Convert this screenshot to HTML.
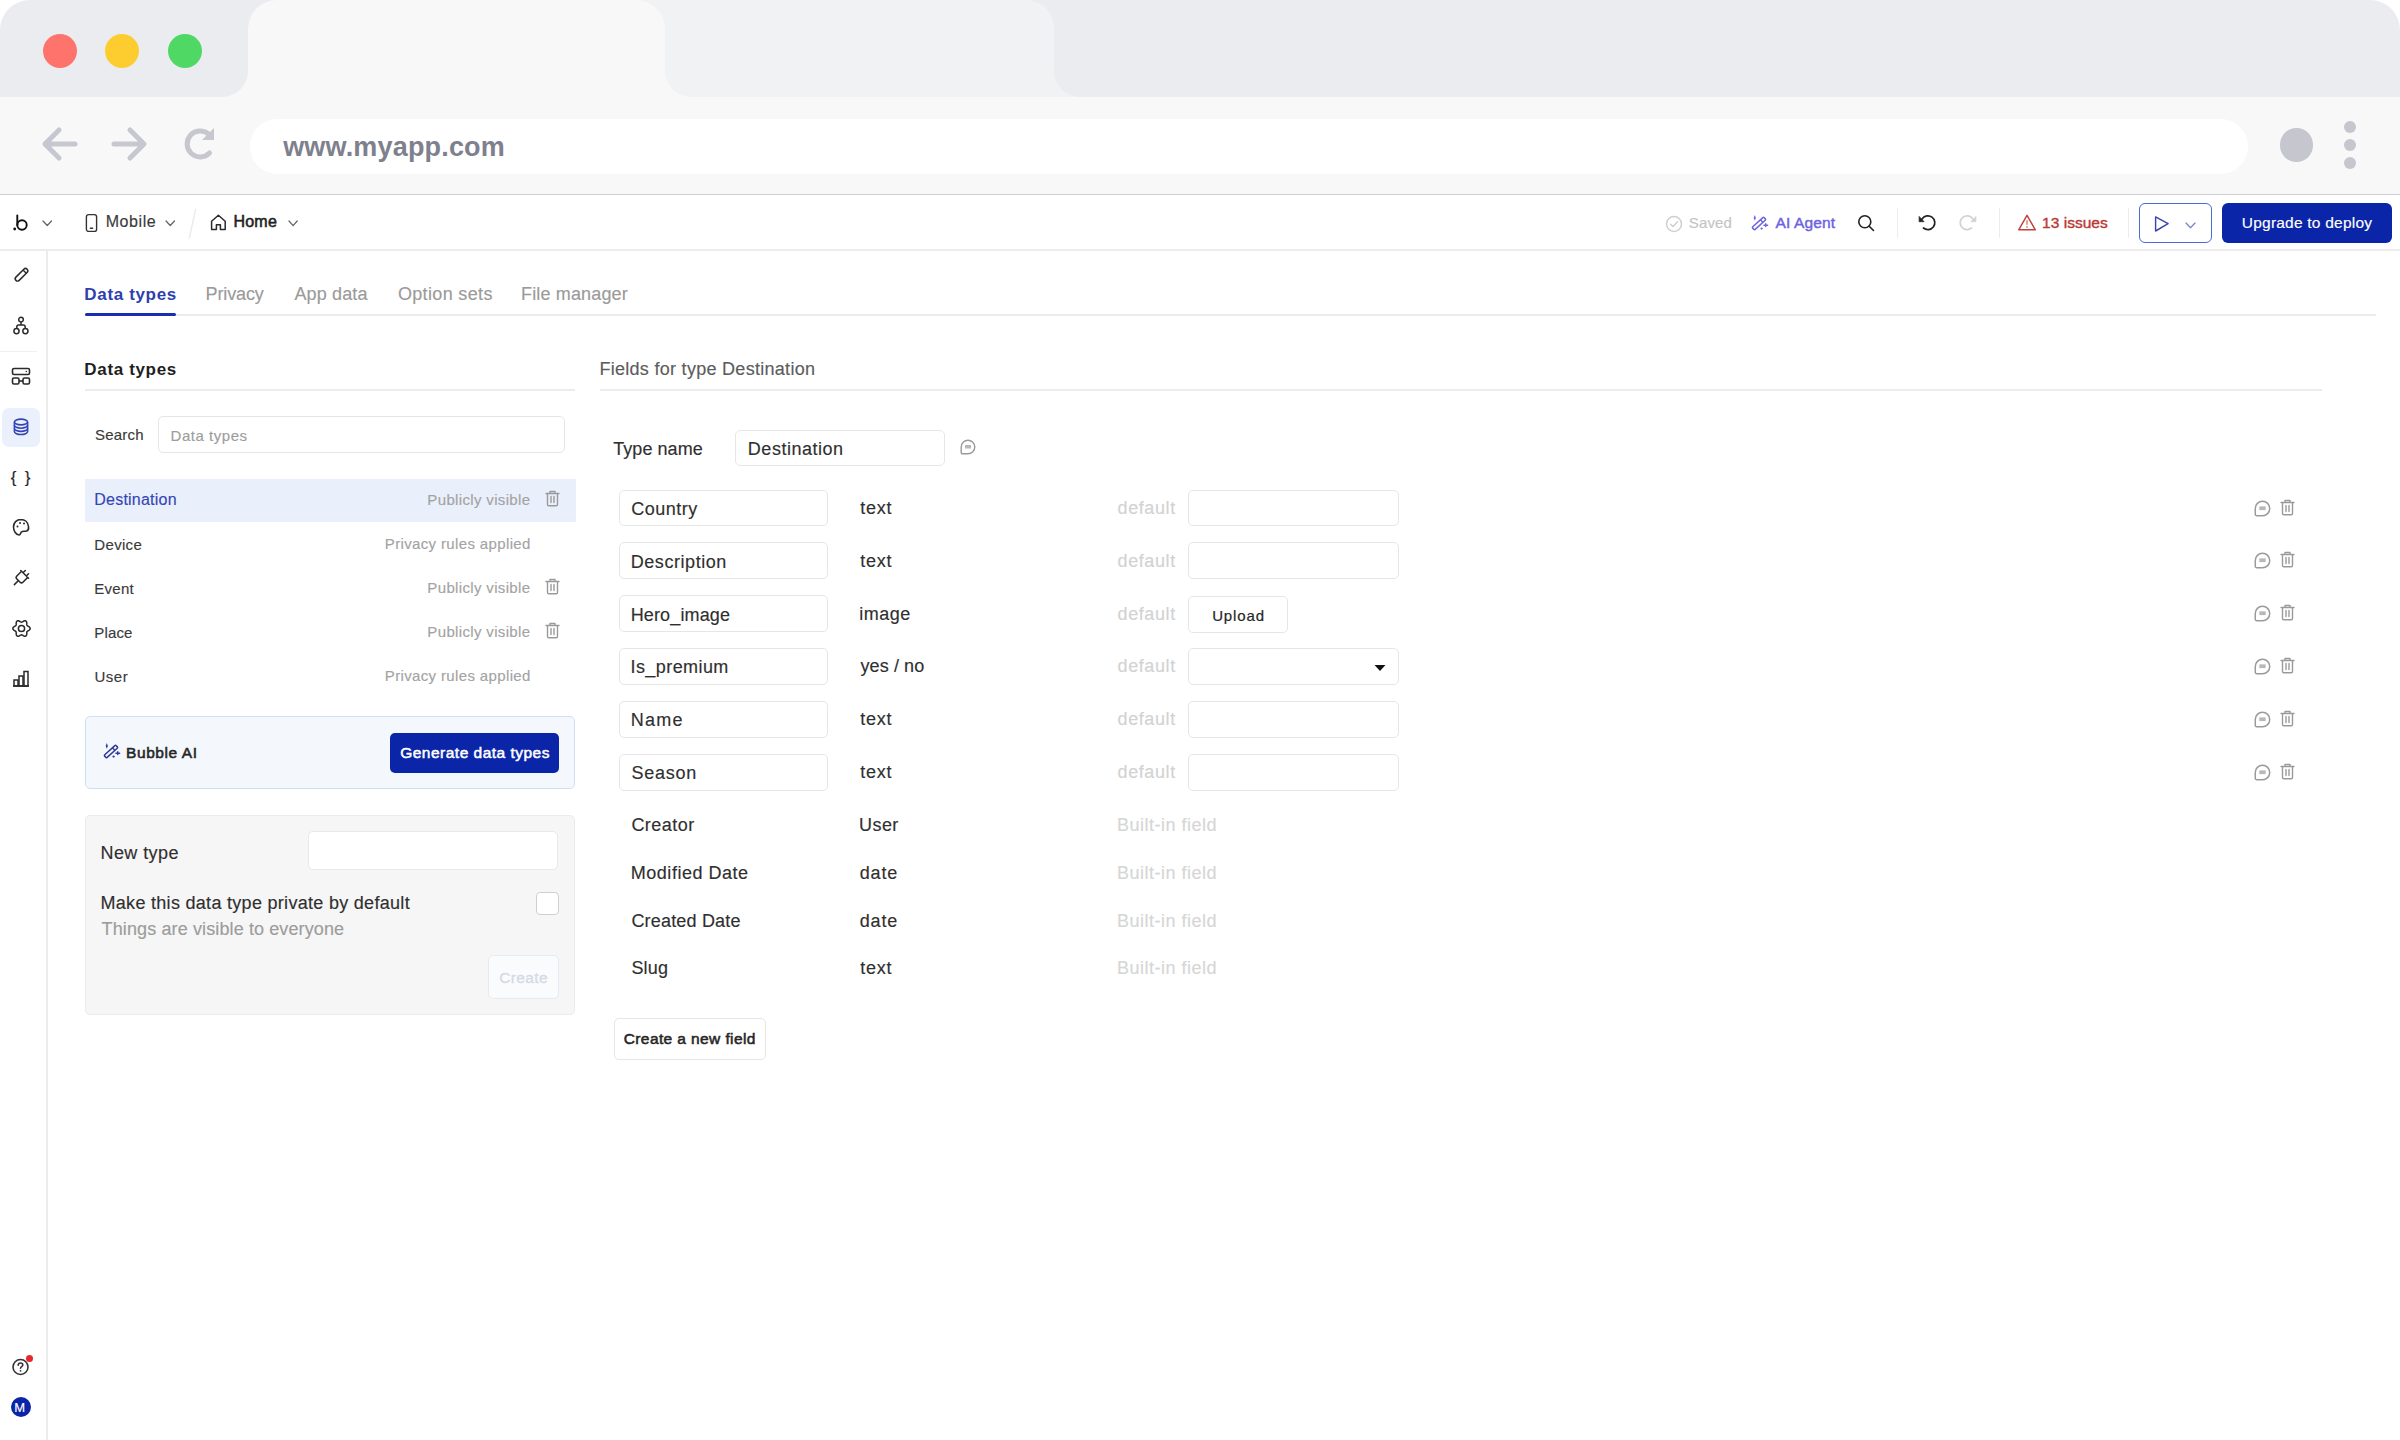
<!DOCTYPE html>
<html><head><meta charset="utf-8"><style>
html,body{margin:0;padding:0;width:2400px;height:1440px;overflow:hidden;background:#ffffff;}
body{position:relative;font-family:"Liberation Sans",sans-serif;}
.t{position:absolute;white-space:nowrap;}
.r{position:absolute;}
svg.r{overflow:visible;}
</style></head><body>
<div class="r" style="left:0px;top:0px;width:2400px;height:195px;background:#ebecef;border-radius:30px 30px 0 0;"></div>
<div class="r" style="left:620px;top:0px;width:434px;height:97px;background:#f1f2f4;border-radius:0 28px 0 0;"></div>
<svg class="r" style="left:1054px;top:71px;" width="26" height="26" viewBox="0 0 26 26" fill="none"><path d="M0 0 V26 H26 A26 26 0 0 1 0 0Z" fill="#f1f2f4"/></svg>
<div class="r" style="left:248px;top:0px;width:417px;height:120px;background:#f8f8f8;border-radius:29px 29px 0 0;"></div>
<div class="r" style="left:0px;top:97px;width:2400px;height:98px;background:#f8f8f8;"></div>
<svg class="r" style="left:222px;top:71px;" width="26" height="26" viewBox="0 0 26 26" fill="none"><path d="M26 0 V26 H0 A26 26 0 0 0 26 0Z" fill="#f8f8f8"/></svg>
<svg class="r" style="left:665px;top:71px;" width="26" height="26" viewBox="0 0 26 26" fill="none"><path d="M0 0 V26 H26 A26 26 0 0 1 0 0Z" fill="#f8f8f8"/></svg>
<div class="r" style="left:43px;top:34px;width:34px;height:34px;background:#fe736b;border-radius:17px;"></div>
<div class="r" style="left:105px;top:34px;width:34px;height:34px;background:#fdcd2f;border-radius:17px;"></div>
<div class="r" style="left:167.5px;top:34px;width:34.0px;height:34px;background:#50d865;border-radius:17px;"></div>
<svg class="r" style="left:40px;top:124px;" width="40" height="40" viewBox="0 0 40 40" fill="none"><path d="M35 20H7M19 6L5 20L19 34" stroke="#c6c7cf" stroke-width="5" stroke-linecap="round" stroke-linejoin="round"/></svg>
<svg class="r" style="left:109px;top:124px;" width="40" height="40" viewBox="0 0 40 40" fill="none"><path d="M5 20H33M21 6L35 20L21 34" stroke="#c6c7cf" stroke-width="5" stroke-linecap="round" stroke-linejoin="round"/></svg>
<svg class="r" style="left:180px;top:125px;" width="38" height="38" viewBox="0 0 38 38" fill="none"><path d="M29.5 28A13 13 0 1 1 28.5 9" stroke="#c6c7cf" stroke-width="5" stroke-linecap="round"/><path d="M34 3V15H22Z" fill="#c6c7cf"/></svg>
<div class="r" style="left:250px;top:119px;width:1998px;height:55px;background:#ffffff;border-radius:28px;"></div>
<div class="t" style="left:283.18px;top:134.05px;font-size:27px;line-height:27px;color:#7e818d;font-weight:700;letter-spacing:0.171px;">www.myapp.com</div>
<div class="r" style="left:2280px;top:128px;width:33px;height:34px;background:#c5c6ce;border-radius:17px;"></div>
<div class="r" style="left:2344px;top:121px;width:12px;height:12px;background:#c5c6ce;border-radius:6px;"></div>
<div class="r" style="left:2344px;top:139px;width:12px;height:12px;background:#c5c6ce;border-radius:6px;"></div>
<div class="r" style="left:2344px;top:156.5px;width:12px;height:12.0px;background:#c5c6ce;border-radius:6px;"></div>
<div class="r" style="left:0px;top:194px;width:2400px;height:1px;background:#cfcfd3;"></div>
<div class="r" style="left:0px;top:195px;width:2400px;height:55px;background:#ffffff;"></div>
<div class="r" style="left:0px;top:249px;width:2400px;height:2px;background:#ececec;"></div>
<svg class="r" style="left:12px;top:214px;" width="18" height="18" viewBox="0 0 18 18" fill="none"><circle cx="2.7" cy="15" r="1.4" fill="#111"/><path d="M5.3 1.5V11" stroke="#111" stroke-width="1.9" stroke-linecap="round"/><circle cx="10" cy="11" r="4.7" stroke="#111" stroke-width="1.9"/></svg>
<svg class="r" style="left:41.5px;top:220px;" width="10.5" height="6.5" viewBox="-1 -1 10.5 6.5" fill="none"><path d="M0 0L4.25 4.5L8.5 0" stroke="#666" stroke-width="1.3" stroke-linecap="round" stroke-linejoin="round"/></svg>
<svg class="r" style="left:85px;top:213px;" width="13" height="20" viewBox="0 0 13 20" fill="none"><rect x="1.4" y="1.6" width="10.2" height="16.8" rx="2.2" stroke="#333" stroke-width="1.4"/><path d="M5.4 15.3H7.6" stroke="#333" stroke-width="1.5" stroke-linecap="round"/></svg>
<div class="t" style="left:105.69px;top:214.40px;font-size:16px;line-height:16px;color:#3a3a3a;-webkit-text-stroke:0.15px #3a3a3a;letter-spacing:0.570px;">Mobile</div>
<svg class="r" style="left:165px;top:220px;" width="10.5" height="6.5" viewBox="-1 -1 10.5 6.5" fill="none"><path d="M0 0L4.25 4.5L8.5 0" stroke="#666" stroke-width="1.3" stroke-linecap="round" stroke-linejoin="round"/></svg>
<svg class="r" style="left:187px;top:207px;" width="10" height="33" viewBox="0 0 10 33" fill="none"><path d="M8.7 1.8L2.2 31.6" stroke="#ebebeb" stroke-width="1.5"/></svg>
<svg class="r" style="left:209px;top:213px;" width="18" height="18" viewBox="0 0 18 18" fill="none"><path d="M2.6 8.3L9.4 2.3L16.2 8.3V16.6H11.4V11.8H7.4V16.6H2.6Z" stroke="#2a2a2a" stroke-width="1.5" stroke-linejoin="round"/></svg>
<div class="t" style="left:233.39px;top:213.90px;font-size:16px;line-height:16px;color:#222;-webkit-text-stroke:0.55px #222;letter-spacing:0.273px;">Home</div>
<svg class="r" style="left:287.8px;top:220.2px;" width="10.2" height="6.6" viewBox="-1 -1 10.2 6.6" fill="none"><path d="M0 0L4.1 4.6L8.2 0" stroke="#666" stroke-width="1.3" stroke-linecap="round" stroke-linejoin="round"/></svg>
<svg class="r" style="left:1665px;top:215px;" width="18" height="18" viewBox="0 0 18 18" fill="none"><circle cx="9" cy="9" r="7.5" stroke="#cfcfcf" stroke-width="1.5"/><path d="M5.5 9.2L8 11.5L12.5 6.8" stroke="#cfcfcf" stroke-width="1.5" stroke-linecap="round" stroke-linejoin="round"/></svg>
<div class="t" style="left:1688.82px;top:215.25px;font-size:15px;line-height:15px;color:#c4c4c4;-webkit-text-stroke:0.15px #c4c4c4;letter-spacing:0.154px;">Saved</div>
<svg class="r" style="left:1750px;top:214px;" width="18" height="18" viewBox="0 0 18 18" fill="none"><g transform="rotate(-42 9 9.5)"><rect x="1.2" y="7.7" width="15.6" height="3.6" rx="1" stroke="#6d62e0" stroke-width="1.5"/><path d="M12.6 7.7V11.3" stroke="#6d62e0" stroke-width="1.4"/></g><path d="M4.8 1L5.9 3.9L4.8 6.8L3.7 3.9Z" fill="#6d62e0"/><path d="M13.9 11.2H17.6M15.75 9.8V12.6" stroke="#6d62e0" stroke-width="1.4" stroke-linecap="round"/><circle cx="11.6" cy="14.6" r="1.15" fill="#6d62e0"/></svg>
<div class="t" style="left:1775.47px;top:214.82px;font-size:15.5px;line-height:15.5px;color:#6d62e0;-webkit-text-stroke:0.45px #6d62e0;letter-spacing:0.143px;">AI Agent</div>
<svg class="r" style="left:1857px;top:214px;" width="19" height="19" viewBox="0 0 19 19" fill="none"><circle cx="7.8" cy="7.8" r="6" stroke="#222" stroke-width="1.6"/><path d="M12.2 12.2L16.5 16.5" stroke="#222" stroke-width="1.6" stroke-linecap="round"/></svg>
<div class="r" style="left:1896.5px;top:208px;width:1.5px;height:30px;background:#ededed;"></div>
<svg class="r" style="left:1916px;top:213px;" width="20" height="20" viewBox="0 0 20 20" fill="none"><path d="M4.8 7.4L6.25 5.74A6.9 6.9 0 1 1 7.47 14.99" stroke="#222" stroke-width="1.7" stroke-linecap="round"/><path d="M3.1 3.4V8.7H8.1Z" fill="#222" stroke="#222" stroke-width="0.7" stroke-linejoin="round"/></svg>
<svg class="r" style="left:1959.4px;top:213px;" width="20" height="20" viewBox="0 0 20 20" fill="none"><g transform="translate(20 0) scale(-1 1)"><path d="M4.8 7.4L6.25 5.74A6.9 6.9 0 1 1 7.47 14.99" stroke="#d2d2d2" stroke-width="1.7" stroke-linecap="round"/><path d="M3.1 3.4V8.7H8.1Z" fill="#d2d2d2" stroke="#d2d2d2" stroke-width="0.7" stroke-linejoin="round"/></g></svg>
<div class="r" style="left:1998.5px;top:208px;width:1.5px;height:30px;background:#ededed;"></div>
<svg class="r" style="left:2017px;top:213px;" width="20" height="19" viewBox="0 0 20 19" fill="none"><path d="M10 2.3L18.3 16.8H1.7Z" stroke="#c0403a" stroke-width="1.45" stroke-linejoin="round"/><path d="M10 7.6V11.3" stroke="#d27a74" stroke-width="1.4" stroke-linecap="round"/><circle cx="10" cy="13.9" r="0.85" fill="#d27a74"/></svg>
<div class="t" style="left:2042.02px;top:214.52px;font-size:15.5px;line-height:15.5px;color:#b93a32;-webkit-text-stroke:0.4px #b93a32;letter-spacing:0.030px;">13 issues</div>
<div class="r" style="left:2127.5px;top:208px;width:1.5px;height:30px;background:#ededed;"></div>
<div class="r" style="left:2139px;top:203px;width:73px;height:40px;background:#fff;border:1.5px solid #4a6bd0;box-sizing:border-box;border-radius:6px;"></div>
<svg class="r" style="left:2153px;top:214px;" width="18" height="19" viewBox="0 0 18 19" fill="none"><path d="M2.6 2.9L15.1 9.7L2.6 17Z" stroke="#3a46b0" stroke-width="1.45" stroke-linejoin="round"/></svg>
<svg class="r" style="left:2185.3px;top:221.8px;" width="11" height="6.8" viewBox="-1 -1 11 6.8" fill="none"><path d="M0 0L4.5 4.8L9 0" stroke="#7f86c4" stroke-width="1.3" stroke-linecap="round" stroke-linejoin="round"/></svg>
<div class="r" style="left:2222px;top:203px;width:170px;height:40px;background:#0b25a8;border-radius:6px;"></div>
<div class="t" style="left:2241.80px;top:214.82px;font-size:15.5px;line-height:15.5px;color:#ffffff;-webkit-text-stroke:0.15px #ffffff;letter-spacing:0.219px;">Upgrade to deploy</div>
<div class="r" style="left:46px;top:250px;width:2px;height:1190px;background:#ececec;"></div>
<div class="r" style="left:0px;top:351px;width:37px;height:1px;background:#f0f0f0;"></div>
<div class="r" style="left:2px;top:408px;width:38px;height:39px;background:#ebf1fc;border-radius:7px;"></div>
<svg class="r" style="left:12px;top:266px;" width="18" height="18" viewBox="0 0 18 18" fill="none"><g transform="rotate(-45 9.5 8.8)"><rect x="1.6" y="6.5" width="15.8" height="4.6" rx="2.3" stroke="#2b2b2b" stroke-width="1.5"/><path d="M13.9 6.5V11.1" stroke="#2b2b2b" stroke-width="1.4"/></g></svg>
<svg class="r" style="left:12px;top:316px;" width="18" height="20" viewBox="0 0 18 20" fill="none"><circle cx="9" cy="3.6" r="2.3" stroke="#2b2b2b" stroke-width="1.5"/><circle cx="4.5" cy="15.1" r="2.6" stroke="#2b2b2b" stroke-width="1.5"/><circle cx="13.4" cy="15.1" r="2.6" stroke="#2b2b2b" stroke-width="1.5"/><path d="M9 5.9V9M4.8 12.5V11C4.8 10 5.6 9 6.6 9H11.4C12.4 9 13.2 10 13.2 11V12.5" stroke="#2b2b2b" stroke-width="1.5"/></svg>
<svg class="r" style="left:11px;top:367px;" width="20" height="19" viewBox="0 0 20 19" fill="none"><rect x="1.5" y="1.5" width="17" height="6" rx="1.5" stroke="#2b2b2b" stroke-width="1.6"/><rect x="1.5" y="11" width="6.5" height="6" rx="1.5" stroke="#2b2b2b" stroke-width="1.6"/><rect x="12" y="11" width="6.5" height="6" rx="1.5" stroke="#2b2b2b" stroke-width="1.6"/><path d="M8 14H12" stroke="#2b2b2b" stroke-width="1.6"/><circle cx="15.3" cy="4.5" r="0.8" fill="#2b2b2b"/></svg>
<svg class="r" style="left:12px;top:417px;" width="18" height="20" viewBox="0 0 18 20" fill="none"><ellipse cx="9" cy="5" rx="6.6" ry="2.9" stroke="#3446b5" stroke-width="1.6"/><path d="M2.4 5V14.6C2.4 16.2 5.4 17.5 9 17.5C12.6 17.5 15.6 16.2 15.6 14.6V5" stroke="#3446b5" stroke-width="1.6"/><path d="M2.4 8.3C2.4 9.9 5.4 11.2 9 11.2C12.6 11.2 15.6 9.9 15.6 8.3M2.4 11.5C2.4 13.1 5.4 14.4 9 14.4C12.6 14.4 15.6 13.1 15.6 11.5" stroke="#3446b5" stroke-width="1.6"/></svg>
<div class="t" style="left:10.72px;top:468.55px;font-size:17px;line-height:17px;color:#2b2b2b;-webkit-text-stroke:0.15px #2b2b2b;letter-spacing:1.763px;">{ }</div>
<svg class="r" style="left:12px;top:518px;" width="18" height="19" viewBox="0 0 18 19" fill="none"><path d="M9 1.5C4.5 1.5 1.5 4.8 1.5 9C1.5 13 4.3 17 7 17C8.7 17 8.3 15 9.3 14C10.5 12.8 12.5 13.5 14.5 13C16.3 12.5 16.8 10.5 16.5 8.5C16 4.3 12.8 1.5 9 1.5Z" stroke="#2b2b2b" stroke-width="1.6"/><circle cx="5.5" cy="8.5" r="1" fill="#2b2b2b"/><circle cx="8" cy="5" r="1" fill="#2b2b2b"/><circle cx="12" cy="5.5" r="1" fill="#2b2b2b"/></svg>
<svg class="r" style="left:12px;top:568px;" width="19" height="19" viewBox="0 0 19 19" fill="none"><g transform="rotate(-45 9.5 9.5)"><path d="M14 5.2H7.2Q5.2 5.2 5.2 7.2V11.8Q5.2 13.8 7.2 13.8H14" stroke="#2b2b2b" stroke-width="1.5" stroke-linejoin="round"/><path d="M14 4V15M14 7.2H17.2M14 11.8H17.2M5.2 9.5H-0.6" stroke="#2b2b2b" stroke-width="1.5" stroke-linecap="round"/></g></svg>
<svg class="r" style="left:11.5px;top:618.8px;" width="19" height="19" viewBox="0 0 19 19" fill="none"><path d="M18.15 9.50 L18.04 10.06 L17.74 10.59 L17.29 11.05 L16.74 11.44 L16.19 11.77 L15.68 12.06 L15.27 12.35 L15.00 12.67 L14.85 13.08 L14.81 13.57 L14.81 14.15 L14.80 14.80 L14.74 15.47 L14.56 16.10 L14.26 16.62 L13.83 16.99 L13.29 17.18 L12.68 17.18 L12.05 17.02 L11.44 16.74 L10.88 16.42 L10.37 16.13 L9.92 15.92 L9.50 15.85 L9.08 15.92 L8.63 16.13 L8.12 16.42 L7.56 16.74 L6.95 17.02 L6.32 17.18 L5.71 17.18 L5.18 16.99 L4.74 16.62 L4.44 16.10 L4.26 15.47 L4.20 14.80 L4.19 14.15 L4.19 13.57 L4.15 13.08 L4.00 12.67 L3.73 12.35 L3.32 12.06 L2.81 11.77 L2.26 11.44 L1.71 11.05 L1.26 10.59 L0.96 10.06 L0.85 9.50 L0.96 8.94 L1.26 8.41 L1.71 7.95 L2.26 7.56 L2.81 7.23 L3.32 6.94 L3.73 6.65 L4.00 6.33 L4.15 5.92 L4.19 5.43 L4.19 4.85 L4.20 4.20 L4.26 3.53 L4.44 2.90 L4.74 2.38 L5.17 2.01 L5.71 1.82 L6.32 1.82 L6.95 1.98 L7.56 2.26 L8.12 2.58 L8.63 2.87 L9.08 3.08 L9.50 3.15 L9.92 3.08 L10.37 2.87 L10.88 2.58 L11.44 2.26 L12.05 1.98 L12.68 1.82 L13.29 1.82 L13.83 2.01 L14.26 2.38 L14.56 2.90 L14.74 3.53 L14.80 4.20 L14.81 4.85 L14.81 5.43 L14.85 5.92 L15.00 6.32 L15.27 6.65 L15.68 6.94 L16.19 7.23 L16.74 7.56 L17.29 7.95 L17.74 8.41 L18.04 8.94Z" stroke="#2b2b2b" stroke-width="1.5" stroke-linejoin="round"/><circle cx="9.5" cy="9.5" r="3.1" stroke="#2b2b2b" stroke-width="1.5"/></svg>
<svg class="r" style="left:12px;top:670px;" width="18" height="17" viewBox="0 0 18 17" fill="none"><path d="M1 16H17" stroke="#2b2b2b" stroke-width="1.6"/><rect x="2" y="10" width="4" height="6" stroke="#2b2b2b" stroke-width="1.5"/><rect x="7" y="6" width="4" height="10" stroke="#2b2b2b" stroke-width="1.5"/><rect x="12" y="1.5" width="4" height="14.5" stroke="#2b2b2b" stroke-width="1.5"/></svg>
<svg class="r" style="left:11px;top:1357px;" width="19" height="19" viewBox="0 0 19 19" fill="none"><circle cx="9.5" cy="10" r="7.5" stroke="#333" stroke-width="1.6"/><path d="M7.2 8.2C7.2 6.8 8.2 6 9.5 6C10.8 6 11.8 6.8 11.8 8C11.8 9.5 9.5 9.7 9.5 11.3" stroke="#333" stroke-width="1.6" stroke-linecap="round"/><circle cx="9.5" cy="13.8" r="0.9" fill="#333"/></svg>
<div class="r" style="left:26px;top:1355px;width:7px;height:7px;background:#e8262b;border-radius:4px;"></div>
<div class="r" style="left:11px;top:1397px;width:20px;height:20px;background:#0b25a8;border-radius:10px;"></div>
<div class="t" style="left:14.23px;top:1400.95px;font-size:13px;line-height:13px;color:#ffffff;-webkit-text-stroke:0.15px #ffffff;">M</div>
<div class="t" style="left:84.36px;top:286.05px;font-size:17px;line-height:17px;color:#2f3fae;font-weight:700;letter-spacing:0.652px;">Data types</div>
<div class="t" style="left:205.52px;top:285.20px;font-size:18px;line-height:18px;color:#9a9a9a;-webkit-text-stroke:0.15px #9a9a9a;letter-spacing:-0.126px;">Privacy</div>
<div class="t" style="left:294.46px;top:285.20px;font-size:18px;line-height:18px;color:#9a9a9a;-webkit-text-stroke:0.15px #9a9a9a;letter-spacing:0.137px;">App data</div>
<div class="t" style="left:397.90px;top:285.20px;font-size:18px;line-height:18px;color:#9a9a9a;-webkit-text-stroke:0.15px #9a9a9a;letter-spacing:0.344px;">Option sets</div>
<div class="t" style="left:521.02px;top:285.20px;font-size:18px;line-height:18px;color:#9a9a9a;-webkit-text-stroke:0.15px #9a9a9a;letter-spacing:0.153px;">File manager</div>
<div class="r" style="left:85px;top:314px;width:2291px;height:2px;background:#ececec;"></div>
<div class="r" style="left:85px;top:313px;width:91px;height:3px;background:#1a2fb0;border-radius:1.5px;"></div>
<div class="t" style="left:84.36px;top:361.05px;font-size:17px;line-height:17px;color:#1f1f1f;font-weight:700;letter-spacing:0.652px;">Data types</div>
<div class="r" style="left:85px;top:389px;width:490px;height:2px;background:#ececec;"></div>
<div class="t" style="left:94.92px;top:427.25px;font-size:15px;line-height:15px;color:#3a3a3a;-webkit-text-stroke:0.15px #3a3a3a;letter-spacing:0.225px;">Search</div>
<div class="r" style="left:158px;top:416px;width:407px;height:37px;background:#fff;border:1.5px solid #e6e6e6;box-sizing:border-box;border-radius:5px;"></div>
<div class="t" style="left:170.57px;top:428.25px;font-size:15px;line-height:15px;color:#9d9d9d;-webkit-text-stroke:0.15px #9d9d9d;letter-spacing:0.539px;">Data types</div>
<div class="r" style="left:85px;top:479px;width:491px;height:43px;background:#e9f0fc;"></div>
<div class="t" style="left:94.29px;top:491.90px;font-size:16px;line-height:16px;color:#3446b5;-webkit-text-stroke:0.15px #3446b5;letter-spacing:0.223px;">Destination</div>
<div class="t" style="left:427.37px;top:491.75px;font-size:15px;line-height:15px;color:#a3a3a3;-webkit-text-stroke:0.15px #a3a3a3;letter-spacing:0.345px;">Publicly visible</div>
<svg class="r" style="left:545px;top:490.0px;" width="15" height="17" viewBox="0 0 15 17" fill="none"><path d="M1 3.5H14" stroke="#9a9a9a" stroke-width="1.4" stroke-linecap="round"/><path d="M5 3.5V1.5H10V3.5" stroke="#9a9a9a" stroke-width="1.4" stroke-linejoin="round"/><path d="M2.5 3.5V14.5C2.5 15.3 3 15.8 3.8 15.8H11.2C12 15.8 12.5 15.3 12.5 14.5V3.5" stroke="#9a9a9a" stroke-width="1.4"/><path d="M6 6.5V12.5M9 6.5V12.5" stroke="#9a9a9a" stroke-width="1.4" stroke-linecap="round"/></svg>
<div class="t" style="left:94.37px;top:536.75px;font-size:15px;line-height:15px;color:#3a3a3a;-webkit-text-stroke:0.15px #3a3a3a;letter-spacing:0.311px;">Device</div>
<div class="t" style="left:384.77px;top:535.75px;font-size:15px;line-height:15px;color:#a3a3a3;-webkit-text-stroke:0.15px #a3a3a3;letter-spacing:0.360px;">Privacy rules applied</div>
<div class="t" style="left:94.37px;top:580.75px;font-size:15px;line-height:15px;color:#3a3a3a;-webkit-text-stroke:0.15px #3a3a3a;letter-spacing:0.245px;">Event</div>
<div class="t" style="left:427.37px;top:579.75px;font-size:15px;line-height:15px;color:#a3a3a3;-webkit-text-stroke:0.15px #a3a3a3;letter-spacing:0.345px;">Publicly visible</div>
<svg class="r" style="left:545px;top:578.0px;" width="15" height="17" viewBox="0 0 15 17" fill="none"><path d="M1 3.5H14" stroke="#9a9a9a" stroke-width="1.4" stroke-linecap="round"/><path d="M5 3.5V1.5H10V3.5" stroke="#9a9a9a" stroke-width="1.4" stroke-linejoin="round"/><path d="M2.5 3.5V14.5C2.5 15.3 3 15.8 3.8 15.8H11.2C12 15.8 12.5 15.3 12.5 14.5V3.5" stroke="#9a9a9a" stroke-width="1.4"/><path d="M6 6.5V12.5M9 6.5V12.5" stroke="#9a9a9a" stroke-width="1.4" stroke-linecap="round"/></svg>
<div class="t" style="left:94.37px;top:624.75px;font-size:15px;line-height:15px;color:#3a3a3a;-webkit-text-stroke:0.15px #3a3a3a;letter-spacing:0.145px;">Place</div>
<div class="t" style="left:427.37px;top:623.75px;font-size:15px;line-height:15px;color:#a3a3a3;-webkit-text-stroke:0.15px #a3a3a3;letter-spacing:0.345px;">Publicly visible</div>
<svg class="r" style="left:545px;top:622.0px;" width="15" height="17" viewBox="0 0 15 17" fill="none"><path d="M1 3.5H14" stroke="#9a9a9a" stroke-width="1.4" stroke-linecap="round"/><path d="M5 3.5V1.5H10V3.5" stroke="#9a9a9a" stroke-width="1.4" stroke-linejoin="round"/><path d="M2.5 3.5V14.5C2.5 15.3 3 15.8 3.8 15.8H11.2C12 15.8 12.5 15.3 12.5 14.5V3.5" stroke="#9a9a9a" stroke-width="1.4"/><path d="M6 6.5V12.5M9 6.5V12.5" stroke="#9a9a9a" stroke-width="1.4" stroke-linecap="round"/></svg>
<div class="t" style="left:94.44px;top:668.75px;font-size:15px;line-height:15px;color:#3a3a3a;-webkit-text-stroke:0.15px #3a3a3a;letter-spacing:0.511px;">User</div>
<div class="t" style="left:384.77px;top:667.75px;font-size:15px;line-height:15px;color:#a3a3a3;-webkit-text-stroke:0.15px #a3a3a3;letter-spacing:0.360px;">Privacy rules applied</div>
<div class="r" style="left:85px;top:716px;width:490px;height:73px;background:#f4f8fd;border:1.5px solid #cfe0f3;box-sizing:border-box;border-radius:5px;"></div>
<svg class="r" style="left:102px;top:742px;" width="18" height="18" viewBox="0 0 18 18" fill="none"><g transform="rotate(-42 9 9.5)"><rect x="1.2" y="7.7" width="15.6" height="3.6" rx="1" stroke="#2d3a98" stroke-width="1.5"/><path d="M12.6 7.7V11.3" stroke="#2d3a98" stroke-width="1.4"/></g><path d="M4.8 1L5.9 3.9L4.8 6.8L3.7 3.9Z" fill="#2d3a98"/><path d="M13.9 11.2H17.6M15.75 9.8V12.6" stroke="#2d3a98" stroke-width="1.4" stroke-linecap="round"/><circle cx="11.6" cy="14.6" r="1.15" fill="#2d3a98"/></svg>
<div class="t" style="left:126.03px;top:745.23px;font-size:15.5px;line-height:15.5px;color:#262626;-webkit-text-stroke:0.55px #262626;letter-spacing:0.576px;">Bubble AI</div>
<div class="r" style="left:390px;top:733px;width:169px;height:40px;background:#0b25a8;border-radius:5px;"></div>
<div class="t" style="left:400.22px;top:745.33px;font-size:15.5px;line-height:15.5px;color:#ffffff;-webkit-text-stroke:0.5px #ffffff;letter-spacing:0.489px;">Generate data types</div>
<div class="r" style="left:85px;top:815px;width:490px;height:200px;background:#f6f6f6;border:1.5px solid #ebebeb;box-sizing:border-box;border-radius:5px;"></div>
<div class="t" style="left:100.52px;top:844.40px;font-size:18px;line-height:18px;color:#2f2f2f;-webkit-text-stroke:0.15px #2f2f2f;letter-spacing:0.418px;">New type</div>
<div class="r" style="left:308px;top:831px;width:250px;height:39px;background:#fff;border:1.5px solid #e8e8e8;box-sizing:border-box;border-radius:5px;"></div>
<div class="t" style="left:100.52px;top:894.40px;font-size:18px;line-height:18px;color:#2f2f2f;-webkit-text-stroke:0.15px #2f2f2f;letter-spacing:0.296px;">Make this data type private by default</div>
<div class="r" style="left:536px;top:892px;width:23px;height:23px;background:#fff;border:1.5px solid #cfcfcf;box-sizing:border-box;border-radius:4px;"></div>
<div class="t" style="left:101.60px;top:919.70px;font-size:18px;line-height:18px;color:#9c9c9c;-webkit-text-stroke:0.15px #9c9c9c;letter-spacing:0.117px;">Things are visible to everyone</div>
<div class="r" style="left:488px;top:955px;width:71px;height:44px;background:#fafbfd;border:1.5px solid #e5ebf3;box-sizing:border-box;border-radius:5px;"></div>
<div class="t" style="left:499.21px;top:969.83px;font-size:15.5px;line-height:15.5px;color:#d3dae6;-webkit-text-stroke:0.3px #d3dae6;letter-spacing:0.389px;">Create</div>
<div class="t" style="left:599.42px;top:359.70px;font-size:18px;line-height:18px;color:#5c5c5c;-webkit-text-stroke:0.15px #5c5c5c;letter-spacing:0.288px;">Fields for type Destination</div>
<div class="r" style="left:600px;top:389px;width:1722px;height:2px;background:#ececec;"></div>
<div class="t" style="left:613.20px;top:440.20px;font-size:18px;line-height:18px;color:#2f2f2f;-webkit-text-stroke:0.15px #2f2f2f;letter-spacing:0.066px;">Type name</div>
<div class="r" style="left:735px;top:430px;width:210px;height:36px;background:#fff;border:1.5px solid #e6e6e6;box-sizing:border-box;border-radius:5px;"></div>
<div class="t" style="left:747.82px;top:440.20px;font-size:18px;line-height:18px;color:#2f2f2f;-webkit-text-stroke:0.15px #2f2f2f;letter-spacing:0.527px;">Destination</div>
<svg class="r" style="left:960px;top:439px;" width="16" height="16" viewBox="0 0 16 16" fill="none"><path d="M8 1.2A6.8 6.8 0 1 1 8 14.8H2.5C1.8 14.8 1.2 14.2 1.2 13.5V8A6.8 6.8 0 0 1 8 1.2Z" stroke="#9a9a9a" stroke-width="1.4"/><rect x="5" y="6" width="6" height="3.5" fill="#9a9a9a" opacity="0.7"/></svg>
<div class="r" style="left:618.5px;top:489.5px;width:209.5px;height:36.5px;background:#fff;border:1.5px solid #e6e6e6;box-sizing:border-box;border-radius:5px;"></div>
<div class="t" style="left:631.29px;top:499.70px;font-size:18px;line-height:18px;color:#2f2f2f;-webkit-text-stroke:0.15px #2f2f2f;letter-spacing:0.484px;">Country</div>
<div class="t" style="left:860.23px;top:498.70px;font-size:18px;line-height:18px;color:#2f2f2f;-webkit-text-stroke:0.15px #2f2f2f;letter-spacing:0.796px;">text</div>
<div class="t" style="left:1117.54px;top:498.70px;font-size:18px;line-height:18px;color:#d2d2d2;-webkit-text-stroke:0.15px #d2d2d2;letter-spacing:0.604px;">default</div>
<div class="r" style="left:1188px;top:489.5px;width:210.5px;height:36.5px;background:#fff;border:1.5px solid #e6e6e6;box-sizing:border-box;border-radius:5px;"></div>
<svg class="r" style="left:2254px;top:499.5px;" width="17" height="17" viewBox="0 0 16 16" fill="none"><path d="M8 1.2A6.8 6.8 0 1 1 8 14.8H2.5C1.8 14.8 1.2 14.2 1.2 13.5V8A6.8 6.8 0 0 1 8 1.2Z" stroke="#9a9a9a" stroke-width="1.4"/><rect x="5" y="6" width="6" height="3.5" fill="#9a9a9a" opacity="0.7"/></svg>
<svg class="r" style="left:2280px;top:498.5px;" width="15" height="17" viewBox="0 0 15 17" fill="none"><path d="M1 3.5H14" stroke="#9a9a9a" stroke-width="1.4" stroke-linecap="round"/><path d="M5 3.5V1.5H10V3.5" stroke="#9a9a9a" stroke-width="1.4" stroke-linejoin="round"/><path d="M2.5 3.5V14.5C2.5 15.3 3 15.8 3.8 15.8H11.2C12 15.8 12.5 15.3 12.5 14.5V3.5" stroke="#9a9a9a" stroke-width="1.4"/><path d="M6 6.5V12.5M9 6.5V12.5" stroke="#9a9a9a" stroke-width="1.4" stroke-linecap="round"/></svg>
<div class="r" style="left:618.5px;top:542.4px;width:209.5px;height:36.5px;background:#fff;border:1.5px solid #e6e6e6;box-sizing:border-box;border-radius:5px;"></div>
<div class="t" style="left:630.72px;top:552.60px;font-size:18px;line-height:18px;color:#2f2f2f;-webkit-text-stroke:0.15px #2f2f2f;letter-spacing:0.558px;">Description</div>
<div class="t" style="left:860.23px;top:551.60px;font-size:18px;line-height:18px;color:#2f2f2f;-webkit-text-stroke:0.15px #2f2f2f;letter-spacing:0.796px;">text</div>
<div class="t" style="left:1117.54px;top:551.60px;font-size:18px;line-height:18px;color:#d2d2d2;-webkit-text-stroke:0.15px #d2d2d2;letter-spacing:0.604px;">default</div>
<div class="r" style="left:1188px;top:542.4px;width:210.5px;height:36.5px;background:#fff;border:1.5px solid #e6e6e6;box-sizing:border-box;border-radius:5px;"></div>
<svg class="r" style="left:2254px;top:552.4px;" width="17" height="17" viewBox="0 0 16 16" fill="none"><path d="M8 1.2A6.8 6.8 0 1 1 8 14.8H2.5C1.8 14.8 1.2 14.2 1.2 13.5V8A6.8 6.8 0 0 1 8 1.2Z" stroke="#9a9a9a" stroke-width="1.4"/><rect x="5" y="6" width="6" height="3.5" fill="#9a9a9a" opacity="0.7"/></svg>
<svg class="r" style="left:2280px;top:551.4px;" width="15" height="17" viewBox="0 0 15 17" fill="none"><path d="M1 3.5H14" stroke="#9a9a9a" stroke-width="1.4" stroke-linecap="round"/><path d="M5 3.5V1.5H10V3.5" stroke="#9a9a9a" stroke-width="1.4" stroke-linejoin="round"/><path d="M2.5 3.5V14.5C2.5 15.3 3 15.8 3.8 15.8H11.2C12 15.8 12.5 15.3 12.5 14.5V3.5" stroke="#9a9a9a" stroke-width="1.4"/><path d="M6 6.5V12.5M9 6.5V12.5" stroke="#9a9a9a" stroke-width="1.4" stroke-linecap="round"/></svg>
<div class="r" style="left:618.5px;top:595.3px;width:209.5px;height:36.5px;background:#fff;border:1.5px solid #e6e6e6;box-sizing:border-box;border-radius:5px;"></div>
<div class="t" style="left:630.72px;top:605.50px;font-size:18px;line-height:18px;color:#2f2f2f;-webkit-text-stroke:0.15px #2f2f2f;letter-spacing:0.131px;">Hero_image</div>
<div class="t" style="left:859.30px;top:604.50px;font-size:18px;line-height:18px;color:#2f2f2f;-webkit-text-stroke:0.15px #2f2f2f;letter-spacing:0.489px;">image</div>
<div class="t" style="left:1117.54px;top:604.50px;font-size:18px;line-height:18px;color:#d2d2d2;-webkit-text-stroke:0.15px #d2d2d2;letter-spacing:0.604px;">default</div>
<div class="r" style="left:1188px;top:596.3px;width:100px;height:36.5px;background:#fff;border:1.5px solid #e6e6e6;box-sizing:border-box;border-radius:5px;"></div>
<div class="t" style="left:1212.14px;top:607.55px;font-size:15px;line-height:15px;color:#262626;-webkit-text-stroke:0.2px #262626;letter-spacing:0.879px;">Upload</div>
<svg class="r" style="left:2254px;top:605.3px;" width="17" height="17" viewBox="0 0 16 16" fill="none"><path d="M8 1.2A6.8 6.8 0 1 1 8 14.8H2.5C1.8 14.8 1.2 14.2 1.2 13.5V8A6.8 6.8 0 0 1 8 1.2Z" stroke="#9a9a9a" stroke-width="1.4"/><rect x="5" y="6" width="6" height="3.5" fill="#9a9a9a" opacity="0.7"/></svg>
<svg class="r" style="left:2280px;top:604.3px;" width="15" height="17" viewBox="0 0 15 17" fill="none"><path d="M1 3.5H14" stroke="#9a9a9a" stroke-width="1.4" stroke-linecap="round"/><path d="M5 3.5V1.5H10V3.5" stroke="#9a9a9a" stroke-width="1.4" stroke-linejoin="round"/><path d="M2.5 3.5V14.5C2.5 15.3 3 15.8 3.8 15.8H11.2C12 15.8 12.5 15.3 12.5 14.5V3.5" stroke="#9a9a9a" stroke-width="1.4"/><path d="M6 6.5V12.5M9 6.5V12.5" stroke="#9a9a9a" stroke-width="1.4" stroke-linecap="round"/></svg>
<div class="r" style="left:618.5px;top:648.2px;width:209.5px;height:36.5px;background:#fff;border:1.5px solid #e6e6e6;box-sizing:border-box;border-radius:5px;"></div>
<div class="t" style="left:630.54px;top:658.40px;font-size:18px;line-height:18px;color:#2f2f2f;-webkit-text-stroke:0.15px #2f2f2f;letter-spacing:0.421px;">Is_premium</div>
<div class="t" style="left:860.46px;top:657.40px;font-size:18px;line-height:18px;color:#2f2f2f;-webkit-text-stroke:0.15px #2f2f2f;letter-spacing:0.108px;">yes / no</div>
<div class="t" style="left:1117.54px;top:657.40px;font-size:18px;line-height:18px;color:#d2d2d2;-webkit-text-stroke:0.15px #d2d2d2;letter-spacing:0.604px;">default</div>
<div class="r" style="left:1188px;top:648.2px;width:210.5px;height:36.5px;background:#fff;border:1.5px solid #e6e6e6;box-sizing:border-box;border-radius:5px;"></div>
<svg class="r" style="left:1374px;top:664px;" width="12" height="8" viewBox="0 0 12 8" fill="none"><path d="M0.5 1H11.5L6 7Z" fill="#111"/></svg>
<svg class="r" style="left:2254px;top:658.2px;" width="17" height="17" viewBox="0 0 16 16" fill="none"><path d="M8 1.2A6.8 6.8 0 1 1 8 14.8H2.5C1.8 14.8 1.2 14.2 1.2 13.5V8A6.8 6.8 0 0 1 8 1.2Z" stroke="#9a9a9a" stroke-width="1.4"/><rect x="5" y="6" width="6" height="3.5" fill="#9a9a9a" opacity="0.7"/></svg>
<svg class="r" style="left:2280px;top:657.2px;" width="15" height="17" viewBox="0 0 15 17" fill="none"><path d="M1 3.5H14" stroke="#9a9a9a" stroke-width="1.4" stroke-linecap="round"/><path d="M5 3.5V1.5H10V3.5" stroke="#9a9a9a" stroke-width="1.4" stroke-linejoin="round"/><path d="M2.5 3.5V14.5C2.5 15.3 3 15.8 3.8 15.8H11.2C12 15.8 12.5 15.3 12.5 14.5V3.5" stroke="#9a9a9a" stroke-width="1.4"/><path d="M6 6.5V12.5M9 6.5V12.5" stroke="#9a9a9a" stroke-width="1.4" stroke-linecap="round"/></svg>
<div class="r" style="left:618.5px;top:701.1px;width:209.5px;height:36.5px;background:#fff;border:1.5px solid #e6e6e6;box-sizing:border-box;border-radius:5px;"></div>
<div class="t" style="left:630.72px;top:711.30px;font-size:18px;line-height:18px;color:#2f2f2f;-webkit-text-stroke:0.15px #2f2f2f;letter-spacing:1.239px;">Name</div>
<div class="t" style="left:860.23px;top:710.30px;font-size:18px;line-height:18px;color:#2f2f2f;-webkit-text-stroke:0.15px #2f2f2f;letter-spacing:0.796px;">text</div>
<div class="t" style="left:1117.54px;top:710.30px;font-size:18px;line-height:18px;color:#d2d2d2;-webkit-text-stroke:0.15px #d2d2d2;letter-spacing:0.604px;">default</div>
<div class="r" style="left:1188px;top:701.1px;width:210.5px;height:36.5px;background:#fff;border:1.5px solid #e6e6e6;box-sizing:border-box;border-radius:5px;"></div>
<svg class="r" style="left:2254px;top:711.1px;" width="17" height="17" viewBox="0 0 16 16" fill="none"><path d="M8 1.2A6.8 6.8 0 1 1 8 14.8H2.5C1.8 14.8 1.2 14.2 1.2 13.5V8A6.8 6.8 0 0 1 8 1.2Z" stroke="#9a9a9a" stroke-width="1.4"/><rect x="5" y="6" width="6" height="3.5" fill="#9a9a9a" opacity="0.7"/></svg>
<svg class="r" style="left:2280px;top:710.1px;" width="15" height="17" viewBox="0 0 15 17" fill="none"><path d="M1 3.5H14" stroke="#9a9a9a" stroke-width="1.4" stroke-linecap="round"/><path d="M5 3.5V1.5H10V3.5" stroke="#9a9a9a" stroke-width="1.4" stroke-linejoin="round"/><path d="M2.5 3.5V14.5C2.5 15.3 3 15.8 3.8 15.8H11.2C12 15.8 12.5 15.3 12.5 14.5V3.5" stroke="#9a9a9a" stroke-width="1.4"/><path d="M6 6.5V12.5M9 6.5V12.5" stroke="#9a9a9a" stroke-width="1.4" stroke-linecap="round"/></svg>
<div class="r" style="left:618.5px;top:754.0px;width:209.5px;height:36.5px;background:#fff;border:1.5px solid #e6e6e6;box-sizing:border-box;border-radius:5px;"></div>
<div class="t" style="left:631.38px;top:764.20px;font-size:18px;line-height:18px;color:#2f2f2f;-webkit-text-stroke:0.15px #2f2f2f;letter-spacing:0.764px;">Season</div>
<div class="t" style="left:860.23px;top:763.20px;font-size:18px;line-height:18px;color:#2f2f2f;-webkit-text-stroke:0.15px #2f2f2f;letter-spacing:0.796px;">text</div>
<div class="t" style="left:1117.54px;top:763.20px;font-size:18px;line-height:18px;color:#d2d2d2;-webkit-text-stroke:0.15px #d2d2d2;letter-spacing:0.604px;">default</div>
<div class="r" style="left:1188px;top:754.0px;width:210.5px;height:36.5px;background:#fff;border:1.5px solid #e6e6e6;box-sizing:border-box;border-radius:5px;"></div>
<svg class="r" style="left:2254px;top:764.0px;" width="17" height="17" viewBox="0 0 16 16" fill="none"><path d="M8 1.2A6.8 6.8 0 1 1 8 14.8H2.5C1.8 14.8 1.2 14.2 1.2 13.5V8A6.8 6.8 0 0 1 8 1.2Z" stroke="#9a9a9a" stroke-width="1.4"/><rect x="5" y="6" width="6" height="3.5" fill="#9a9a9a" opacity="0.7"/></svg>
<svg class="r" style="left:2280px;top:763.0px;" width="15" height="17" viewBox="0 0 15 17" fill="none"><path d="M1 3.5H14" stroke="#9a9a9a" stroke-width="1.4" stroke-linecap="round"/><path d="M5 3.5V1.5H10V3.5" stroke="#9a9a9a" stroke-width="1.4" stroke-linejoin="round"/><path d="M2.5 3.5V14.5C2.5 15.3 3 15.8 3.8 15.8H11.2C12 15.8 12.5 15.3 12.5 14.5V3.5" stroke="#9a9a9a" stroke-width="1.4"/><path d="M6 6.5V12.5M9 6.5V12.5" stroke="#9a9a9a" stroke-width="1.4" stroke-linecap="round"/></svg>
<div class="t" style="left:631.39px;top:815.70px;font-size:18px;line-height:18px;color:#2f2f2f;-webkit-text-stroke:0.15px #2f2f2f;letter-spacing:0.494px;">Creator</div>
<div class="t" style="left:859.11px;top:815.70px;font-size:18px;line-height:18px;color:#2f2f2f;-webkit-text-stroke:0.15px #2f2f2f;letter-spacing:0.391px;">User</div>
<div class="t" style="left:1117.02px;top:815.70px;font-size:18px;line-height:18px;color:#d6d6d6;-webkit-text-stroke:0.15px #d6d6d6;letter-spacing:0.506px;">Built-in field</div>
<div class="t" style="left:630.82px;top:863.70px;font-size:18px;line-height:18px;color:#2f2f2f;-webkit-text-stroke:0.15px #2f2f2f;letter-spacing:0.515px;">Modified Date</div>
<div class="t" style="left:859.74px;top:863.70px;font-size:18px;line-height:18px;color:#2f2f2f;-webkit-text-stroke:0.15px #2f2f2f;letter-spacing:0.836px;">date</div>
<div class="t" style="left:1117.02px;top:863.70px;font-size:18px;line-height:18px;color:#d6d6d6;-webkit-text-stroke:0.15px #d6d6d6;letter-spacing:0.506px;">Built-in field</div>
<div class="t" style="left:631.39px;top:911.70px;font-size:18px;line-height:18px;color:#2f2f2f;-webkit-text-stroke:0.15px #2f2f2f;letter-spacing:0.184px;">Created Date</div>
<div class="t" style="left:859.74px;top:911.70px;font-size:18px;line-height:18px;color:#2f2f2f;-webkit-text-stroke:0.15px #2f2f2f;letter-spacing:0.836px;">date</div>
<div class="t" style="left:1117.02px;top:911.70px;font-size:18px;line-height:18px;color:#d6d6d6;-webkit-text-stroke:0.15px #d6d6d6;letter-spacing:0.506px;">Built-in field</div>
<div class="t" style="left:631.48px;top:959.10px;font-size:18px;line-height:18px;color:#2f2f2f;-webkit-text-stroke:0.15px #2f2f2f;letter-spacing:0.149px;">Slug</div>
<div class="t" style="left:860.23px;top:959.10px;font-size:18px;line-height:18px;color:#2f2f2f;-webkit-text-stroke:0.15px #2f2f2f;letter-spacing:0.796px;">text</div>
<div class="t" style="left:1117.02px;top:959.10px;font-size:18px;line-height:18px;color:#d6d6d6;-webkit-text-stroke:0.15px #d6d6d6;letter-spacing:0.506px;">Built-in field</div>
<div class="r" style="left:613.5px;top:1017.5px;width:152.0px;height:42.5px;background:#fff;border:1.5px solid #e6e6e6;box-sizing:border-box;border-radius:5px;"></div>
<div class="t" style="left:623.71px;top:1031.23px;font-size:15.5px;line-height:15.5px;color:#262626;-webkit-text-stroke:0.55px #262626;letter-spacing:0.401px;">Create a new field</div>
</body></html>
